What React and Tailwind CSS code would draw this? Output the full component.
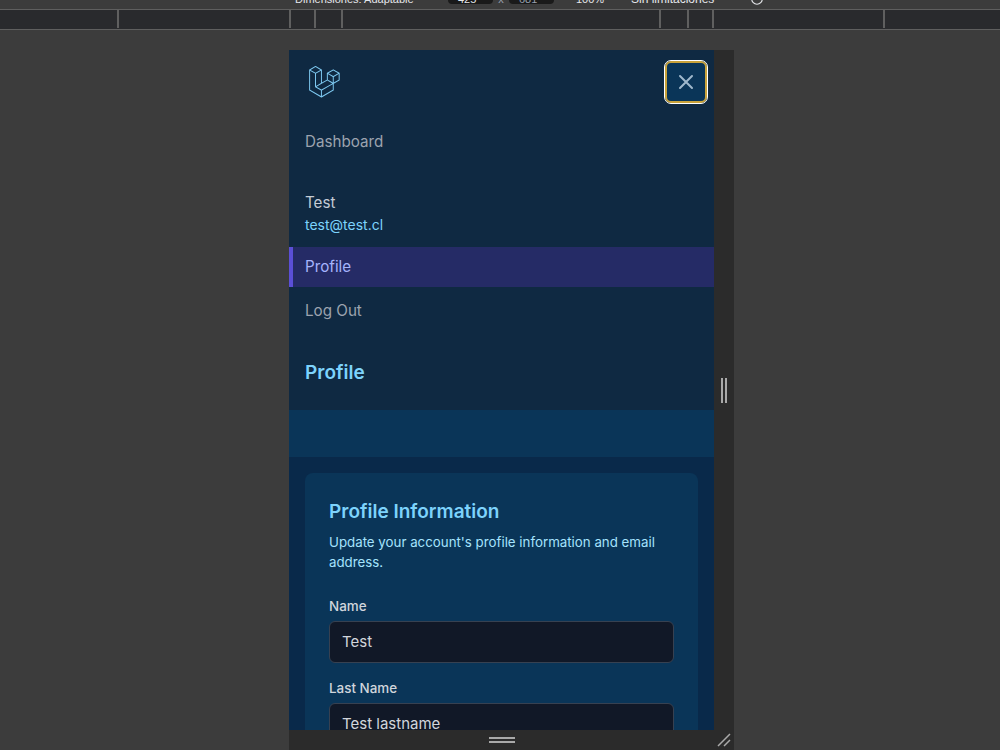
import React from 'react'
import { RotateCw } from 'lucide-react'

const rulerTicks = [119, 172, 25, 27, 318, 28, 25, 171]

const LaravelLogo = () => (
  <svg viewBox="0 0 50 52" className="w-[31px] h-[32px] fill-[#7dc8f0]" xmlns="http://www.w3.org/2000/svg">
    <path d="M49.626 11.564a.809.809 0 0 1 .028.209v10.972a.8.8 0 0 1-.402.694l-9.209 5.302V39.25c0 .286-.152.55-.4.694L20.42 51.01c-.044.025-.092.041-.14.058-.018.006-.035.017-.054.022a.805.805 0 0 1-.41 0c-.022-.006-.042-.018-.063-.026-.044-.016-.09-.03-.132-.054L.402 39.944A.801.801 0 0 1 0 39.25V6.334c0-.072.01-.142.028-.21.006-.023.02-.044.028-.067.015-.042.029-.085.051-.124.015-.026.037-.047.055-.071.023-.032.044-.065.071-.093.023-.023.053-.04.079-.06.029-.024.055-.05.088-.069h.001l9.61-5.533a.802.802 0 0 1 .8 0l9.61 5.533h.002c.032.02.059.045.088.068.026.02.055.038.078.06.028.029.048.062.072.094.017.024.04.045.054.071.023.04.036.082.052.124.008.023.022.044.028.068a.809.809 0 0 1 .028.209v20.559l8.008-4.611v-10.51c0-.07.01-.141.028-.208.007-.024.02-.045.028-.068.016-.042.03-.085.052-.124.015-.026.037-.047.054-.071.024-.032.044-.065.072-.093.023-.023.052-.04.078-.06.03-.024.056-.05.088-.069h.001l9.611-5.533a.801.801 0 0 1 .8 0l9.61 5.533c.034.02.06.045.09.068.025.02.054.038.077.06.028.029.048.062.072.094.018.024.04.045.054.071.023.039.036.082.052.124.009.023.022.044.028.068zm-1.574 10.718v-9.124l-3.363 1.936-4.646 2.675v9.124l8.01-4.611zm-9.61 16.505v-9.13l-4.57 2.61-13.05 7.448v9.216l17.62-10.144zM1.602 7.719v31.068L19.22 48.93v-9.214l-9.204-5.209-.003-.002-.004-.002c-.031-.018-.057-.044-.086-.066-.025-.02-.054-.036-.076-.058l-.002-.003c-.026-.025-.044-.056-.066-.084-.02-.027-.044-.05-.06-.078l-.001-.003c-.018-.03-.029-.066-.042-.1-.013-.03-.03-.058-.038-.09v-.001c-.01-.038-.012-.078-.016-.117-.004-.03-.012-.06-.012-.09v-.002-21.481L4.965 9.654 1.602 7.72zm8.81-5.994L2.405 6.334l8.005 4.609 8.006-4.61-8.006-4.608zm4.164 28.764l4.645-2.674V7.719l-3.363 1.936-4.646 2.675v20.096l3.364-1.937zM39.243 7.164l-8.006 4.609 8.006 4.609 8.005-4.61-8.005-4.608zm-.801 10.605l-4.646-2.675-3.363-1.936v9.124l4.645 2.674 3.364 1.937v-9.124zM20.02 38.33l11.743-6.704 5.87-3.35-8-4.606-9.211 5.303-8.395 4.833 7.993 4.524z" />
  </svg>
)

const CloseIcon = () => (
  <svg viewBox="0 0 24 24" className="w-6 h-6 stroke-[#9fb8cc]" fill="none" strokeWidth="2" strokeLinecap="round" xmlns="http://www.w3.org/2000/svg">
    <path d="M6 18L18 6M6 6l12 12" />
  </svg>
)

const Field = ({ label, value }) => (
  <div>
    <label className="block text-[13.4px] leading-5 font-medium text-gray-300">{label}</label>
    <div className="mt-[5px] h-[42px] flex items-center px-3 bg-[#111827] border border-[#374151] rounded-md text-gray-300 text-[15px]">
      {value}
    </div>
  </div>
)

const App = () => {
  return (
    <div className="w-[1000px] h-[750px] overflow-hidden flex flex-col bg-[#3c3c3c] font-['Inter',sans-serif]">
      {/* devtools toolbar, cut by the top of the shot */}
      <div className="h-[9px] shrink-0 overflow-hidden text-[11px] leading-[14px] text-gray-200 font-['Liberation_Sans',sans-serif]">
        <div className="flex items-start -mt-[8px] pl-[295px]">
          <span className="w-[153px]">Dimensiones: Adaptable</span>
          <span className="w-[45px] h-[12px] rounded bg-[#1a1a1a] pl-[10px]">425</span>
          <span className="w-[16px] text-center text-gray-400">x</span>
          <span className="w-[45px] h-[12px] rounded bg-[#1a1a1a] pl-[10px] text-gray-400">681</span>
          <span className="ml-[22px] w-[55px]">100%</span>
          <span className="w-[119px] text-[12px]">Sin limitaciones</span>
          <RotateCw className="w-[14px] h-[14px] text-gray-200" />
        </div>
      </div>

      {/* ruler */}
      <div className="h-[21px] shrink-0 flex bg-[#292a2d] border-y border-[#5f5f5f]">
        {rulerTicks.map((w, i) => (
          <div key={i} className="border-r-2 border-[#5f5f5f] h-[18px]" style={{ width: w }} />
        ))}
      </div>

      {/* device frame */}
      <div className="flex-1 min-h-0 flex justify-center pt-[20px] pl-[23px]">
        <div className="w-[445px] flex flex-col">
          <div className="flex-1 min-h-0 flex">
            <div className="w-[425px] overflow-hidden bg-[#0f2942] flex flex-col">
              <div className="shrink-0 flex justify-between items-center h-[64px] pl-[20px] pr-[7px]">
                <LaravelLogo />
                <button className="w-[42px] h-[42px] flex items-center justify-center bg-[#0a3558] rounded-md border-2 border-[#c8a23a] outline outline-1 outline-white">
                  <CloseIcon />
                </button>
              </div>
              <div className="shrink-0 pt-[16px] pl-4 text-[15.2px] leading-6 text-[#9ca3af]">Dashboard</div>
              <div className="shrink-0 mt-[37px] pl-4">
                <div className="text-[15.2px] leading-6 text-[#c5ccd6]">Test</div>
                <div className="text-sm leading-5 text-[#7dd3fc]">test@test.cl</div>
              </div>
              <div className="shrink-0 mt-[12px] h-[40px] flex items-center pl-3 border-l-4 border-[#5b4fd6] bg-[#252b66] text-[15.2px] text-[#a5b4fc]">Profile</div>
              <div className="shrink-0 mt-[12px] pl-4 text-[15.2px] leading-6 text-[#9ca3af]">Log Out</div>
              <div className="shrink-0 mt-[36px] pl-4 text-[19px] leading-7 font-semibold text-[#7dd3fc]">Profile</div>
              <div className="shrink-0 mt-[23px] h-[47px] bg-[#0a3558]" />
              <div className="flex-1 bg-[#09294a] pt-4 px-4">
                <div className="bg-[#0a3558] rounded-lg px-6 pt-[25px] pb-6">
                  <h2 className="text-[19px] leading-7 font-semibold text-[#7dd3fc]">Profile Information</h2>
                  <p className="mt-[6px] text-[13.3px] leading-5 text-[#a5e3fd]">Update your account's profile information and email address.</p>
                  <div className="mt-6 flex flex-col gap-[15px]">
                    <Field label="Name" value="Test" />
                    <Field label="Last Name" value="Test lastname" />
                  </div>
                </div>
              </div>
            </div>
            {/* right resize handle */}
            <div className="w-[20px] bg-[#2b2b2b] flex items-center justify-center gap-[2px]">
              <div className="w-[2px] h-[25px] bg-[#a9a9a9]" />
              <div className="w-[2px] h-[25px] bg-[#a9a9a9]" />
            </div>
          </div>
          {/* bottom resize handle */}
          <div className="h-[20px] shrink-0 bg-[#2b2b2b] flex items-center relative pl-[200px]">
            <div className="w-[26px] flex flex-col gap-[2px]">
              <div className="h-[2px] bg-[#a9a9a9]" />
              <div className="h-[2px] bg-[#a9a9a9]" />
            </div>
            <svg viewBox="0 0 14 14" className="absolute right-[3px] bottom-[3px] w-[14px] h-[14px] stroke-[#a9a9a9]" strokeWidth="1.5" xmlns="http://www.w3.org/2000/svg">
              <path d="M1 13L13 1M7 13l6-6" />
            </svg>
          </div>
        </div>
      </div>
    </div>
  )
}

export default App
